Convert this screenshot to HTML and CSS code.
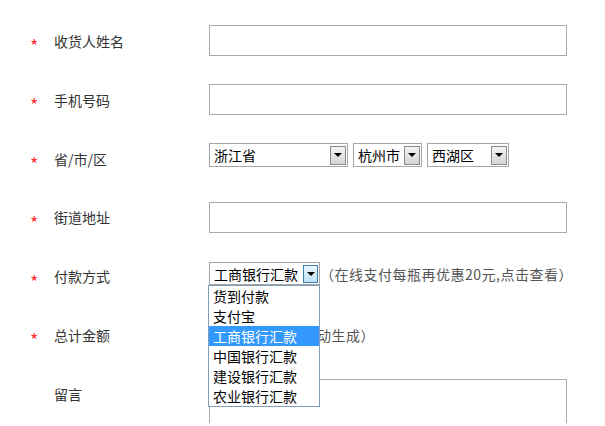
FILE: index.html
```html
<!DOCTYPE html>
<html lang="zh-CN">
<head>
    <meta charset="UTF-8">
    <meta name="viewport" content="width=device-width, initial-scale=1.0">
    <title>收货信息</title>
    <link rel="stylesheet" href="styles.css">
</head>
<body>

<div class="form">
    <div class="row">
        <span class="star">*</span>
        <label class="label">收货人姓名</label>
        <input class="text-input" type="text">
    </div>

    <div class="row">
        <span class="star">*</span>
        <label class="label">手机号码</label>
        <input class="text-input" type="text">
    </div>

    <div class="row">
        <span class="star">*</span>
        <label class="label">省/市/区</label>
        <div class="area">
            <div class="select province">
                <span class="select-value">浙江省</span>
                <span class="select-btn"></span>
            </div>
            <div class="select city">
                <span class="select-value">杭州市</span>
                <span class="select-btn"></span>
            </div>
            <div class="select district">
                <span class="select-value">西湖区</span>
                <span class="select-btn"></span>
            </div>
        </div>
    </div>

    <div class="row">
        <span class="star">*</span>
        <label class="label">街道地址</label>
        <input class="text-input" type="text">
    </div>

    <div class="row">
        <span class="star">*</span>
        <label class="label">付款方式</label>
        <div class="pay">
            <div class="pay-field">
                <div class="select payment focused">
                    <span class="select-value">工商银行汇款</span>
                    <span class="select-btn"></span>
                </div>
                <!-- 展开的下拉列表 -->
                <ul class="dropdown">
                    <li>货到付款</li>
                    <li>支付宝</li>
                    <li class="active">工商银行汇款</li>
                    <li>中国银行汇款</li>
                    <li>建设银行汇款</li>
                    <li>农业银行汇款</li>
                </ul>
            </div>
            <span class="note">（在线支付每瓶再优惠20元,点击查看）</span>
        </div>
    </div>

    <div class="row">
        <span class="star">*</span>
        <label class="label">总计金额</label>
        <span class="note total">（根据数量自动生成）</span>
    </div>

    <div class="row row-top">
        <span class="star"></span>
        <label class="label">留言</label>
        <textarea class="message"></textarea>
    </div>
</div>

</body>
</html>
```

FILE: styles.css
```css
html, body {
    margin: 0;
    padding: 0;
    overflow: hidden;
}

body {
    font-family: "Noto Sans CJK SC", "Microsoft YaHei", sans-serif;
    font-size: 14px;
    color: #333;
    background-color: #fff;
}

.form {
    padding: 11.6px 0 0 30px;
}

.row {
    display: flex;
    align-items: center;
    height: 58.8px;
}

.star {
    width: 24px;
    color: #f33;
    font-size: 18px;
    line-height: 18px;
    padding-top: 9px;
}

.label {
    width: 155px;
    line-height: 20px;
}

.text-input {
    width: 358px;
    height: 31px;
    box-sizing: border-box;
    border: 1px solid #aaa;
    margin: 0;
    padding: 0 5px;
    outline: none;
}

/* 下拉框 */
.area {
    display: flex;
    gap: 5px;
    margin-bottom: 7px;
}

.select {
    display: flex;
    align-items: center;
    height: 24px;
    box-sizing: border-box;
    border: 1px solid #a5a5a5;
    padding: 1px;
    background-color: #fff;
}

.select-value {
    flex-grow: 1;
    padding-left: 3px;
    font-size: 14px;
    line-height: 20px;
    color: #000;
    white-space: nowrap;
}

.select-btn {
    width: 16px;
    height: 19px;
    box-sizing: border-box;
    border: 1px solid #8a8a8a;
    background: linear-gradient(#f4f4f4, #d4d4d4);
    display: flex;
    align-items: center;
    justify-content: center;
}

.select-btn::after {
    content: "";
    border-left: 4px solid transparent;
    border-right: 4px solid transparent;
    border-top: 4px solid #000;
}

.province {
    width: 139px;
}

.city {
    width: 69px;
}

.district {
    width: 82px;
}

.pay {
    display: flex;
    align-items: center;
    margin-bottom: 5px;
}

.pay-field {
    position: relative;
}

.payment {
    width: 111px;
    height: 23px;
}

.payment .select-btn {
    width: 15px;
    height: 18px;
}

.focused .select-btn {
    border-color: #3c7fb1;
    background: linear-gradient(#eaf6fd, #bfe2f8);
}

.dropdown {
    position: absolute;
    left: -1px;
    top: 23px;
    z-index: 1;
    width: 112px;
    box-sizing: border-box;
    margin: 0;
    padding: 0;
    list-style: none;
    border: 1px solid #7f9db9;
    background-color: #fff;
}

.dropdown li {
    height: 20px;
    line-height: 20px;
    padding-left: 4px;
    font-size: 14px;
    color: #000;
    white-space: nowrap;
}

.dropdown li.active {
    background-color: #39f;
    color: #fff;
}

.note {
    margin-left: 0;
    font-size: 14px;
    letter-spacing: 0.5px;
    color: #555;
    white-space: nowrap;
}

.total {
    margin-left: 21px;
}

.row-top {
    align-items: flex-start;
}

.row-top .label {
    margin-top: 19.6px;
}

.message {
    width: 358px;
    height: 60px;
    box-sizing: border-box;
    border: 1px solid #aaa;
    margin: 14.6px 0 0 0;
    resize: none;
    outline: none;
}
```
